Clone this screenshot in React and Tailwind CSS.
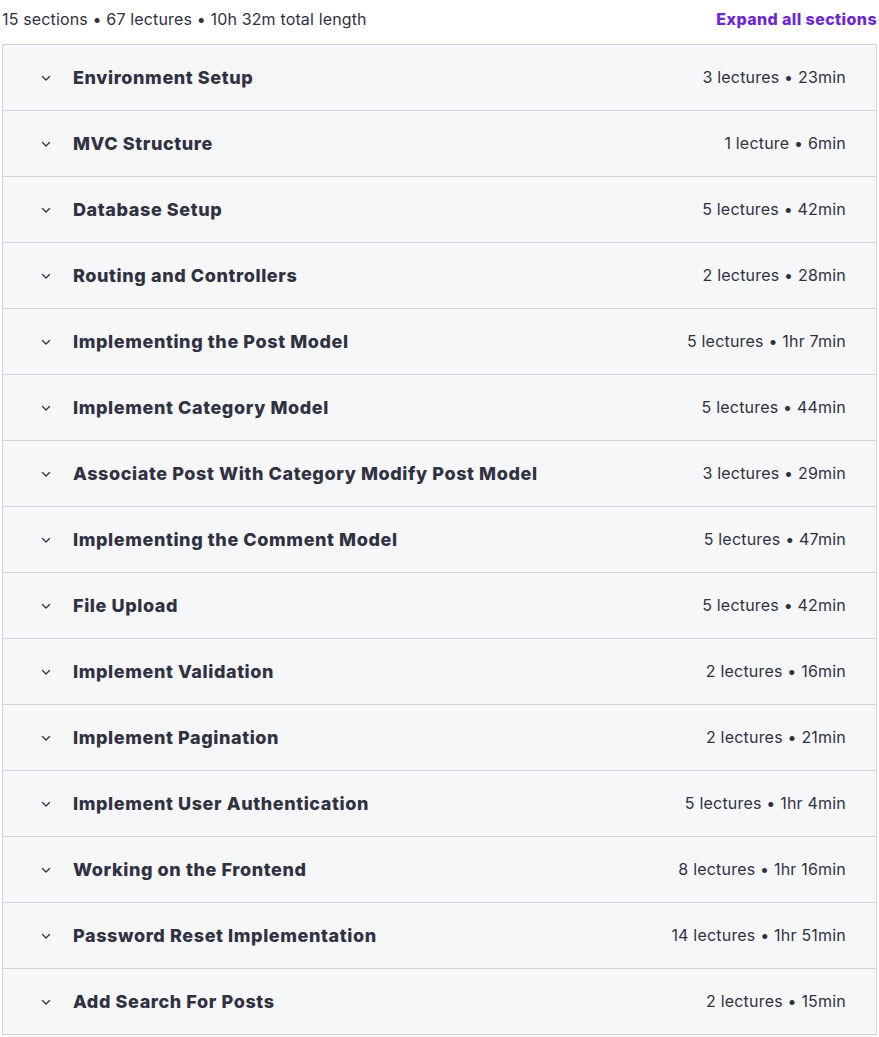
import React from "react";

const sections = [
  ["Environment Setup", "3 lectures • 23min"],
  ["MVC Structure", "1 lecture • 6min"],
  ["Database Setup", "5 lectures • 42min"],
  ["Routing and Controllers", "2 lectures • 28min"],
  ["Implementing the Post Model", "5 lectures • 1hr 7min"],
  ["Implement Category Model", "5 lectures • 44min"],
  ["Associate Post With Category Modify Post Model", "3 lectures • 29min"],
  ["Implementing the Comment Model", "5 lectures • 47min"],
  ["File Upload", "5 lectures • 42min"],
  ["Implement Validation", "2 lectures • 16min"],
  ["Implement Pagination", "2 lectures • 21min"],
  ["Implement User Authentication", "5 lectures • 1hr 4min"],
  ["Working on the Frontend", "8 lectures • 1hr 16min"],
  ["Password Reset Implementation", "14 lectures • 1hr 51min"],
  ["Add Search For Posts", "2 lectures • 15min"],
];

const Chevron = () => (
  <svg width="12" height="12" viewBox="0 0 12 12" fill="none" className="text-[#303141]">
    <path d="M2.5 4.5 L6 8 L9.5 4.5" stroke="currentColor" strokeWidth="1.3" strokeLinecap="round" strokeLinejoin="round" />
  </svg>
);

export default function App() {
  return (
    <div className="w-[879px] bg-white text-[#303141] font-['Inter',sans-serif]">
      {/* header */}
      <div className="flex items-center justify-between h-[38px] pl-[2px] pr-[2px]">
        <span className="text-[16px] tracking-[0.15px]">15 sections • 67 lectures • 10h 32m total length</span>
        <button className="text-[#6d28d2] font-extrabold text-[16px] tracking-[0.4px]">Expand all sections</button>
      </div>
      <div className="mx-[2px] mt-[6px] border border-[#d1d2e0]">
        {sections.map(([title, meta], i) => (
          <div
            key={i}
            className={`flex items-center bg-[#f6f7f9] pl-[37px] pr-[30px] ${i > 0 ? "h-[66px] border-t border-[#d1d2e0]" : "h-[65px]"}`}
          >
            <Chevron />
            <span className="ml-[21px] font-extrabold text-[18px] tracking-[0.6px] flex-1">{title}</span>
            <span className="text-[16px] tracking-[0.2px] mb-[2px]">{meta}</span>
          </div>
        ))}
      </div>
    </div>
  );
}
